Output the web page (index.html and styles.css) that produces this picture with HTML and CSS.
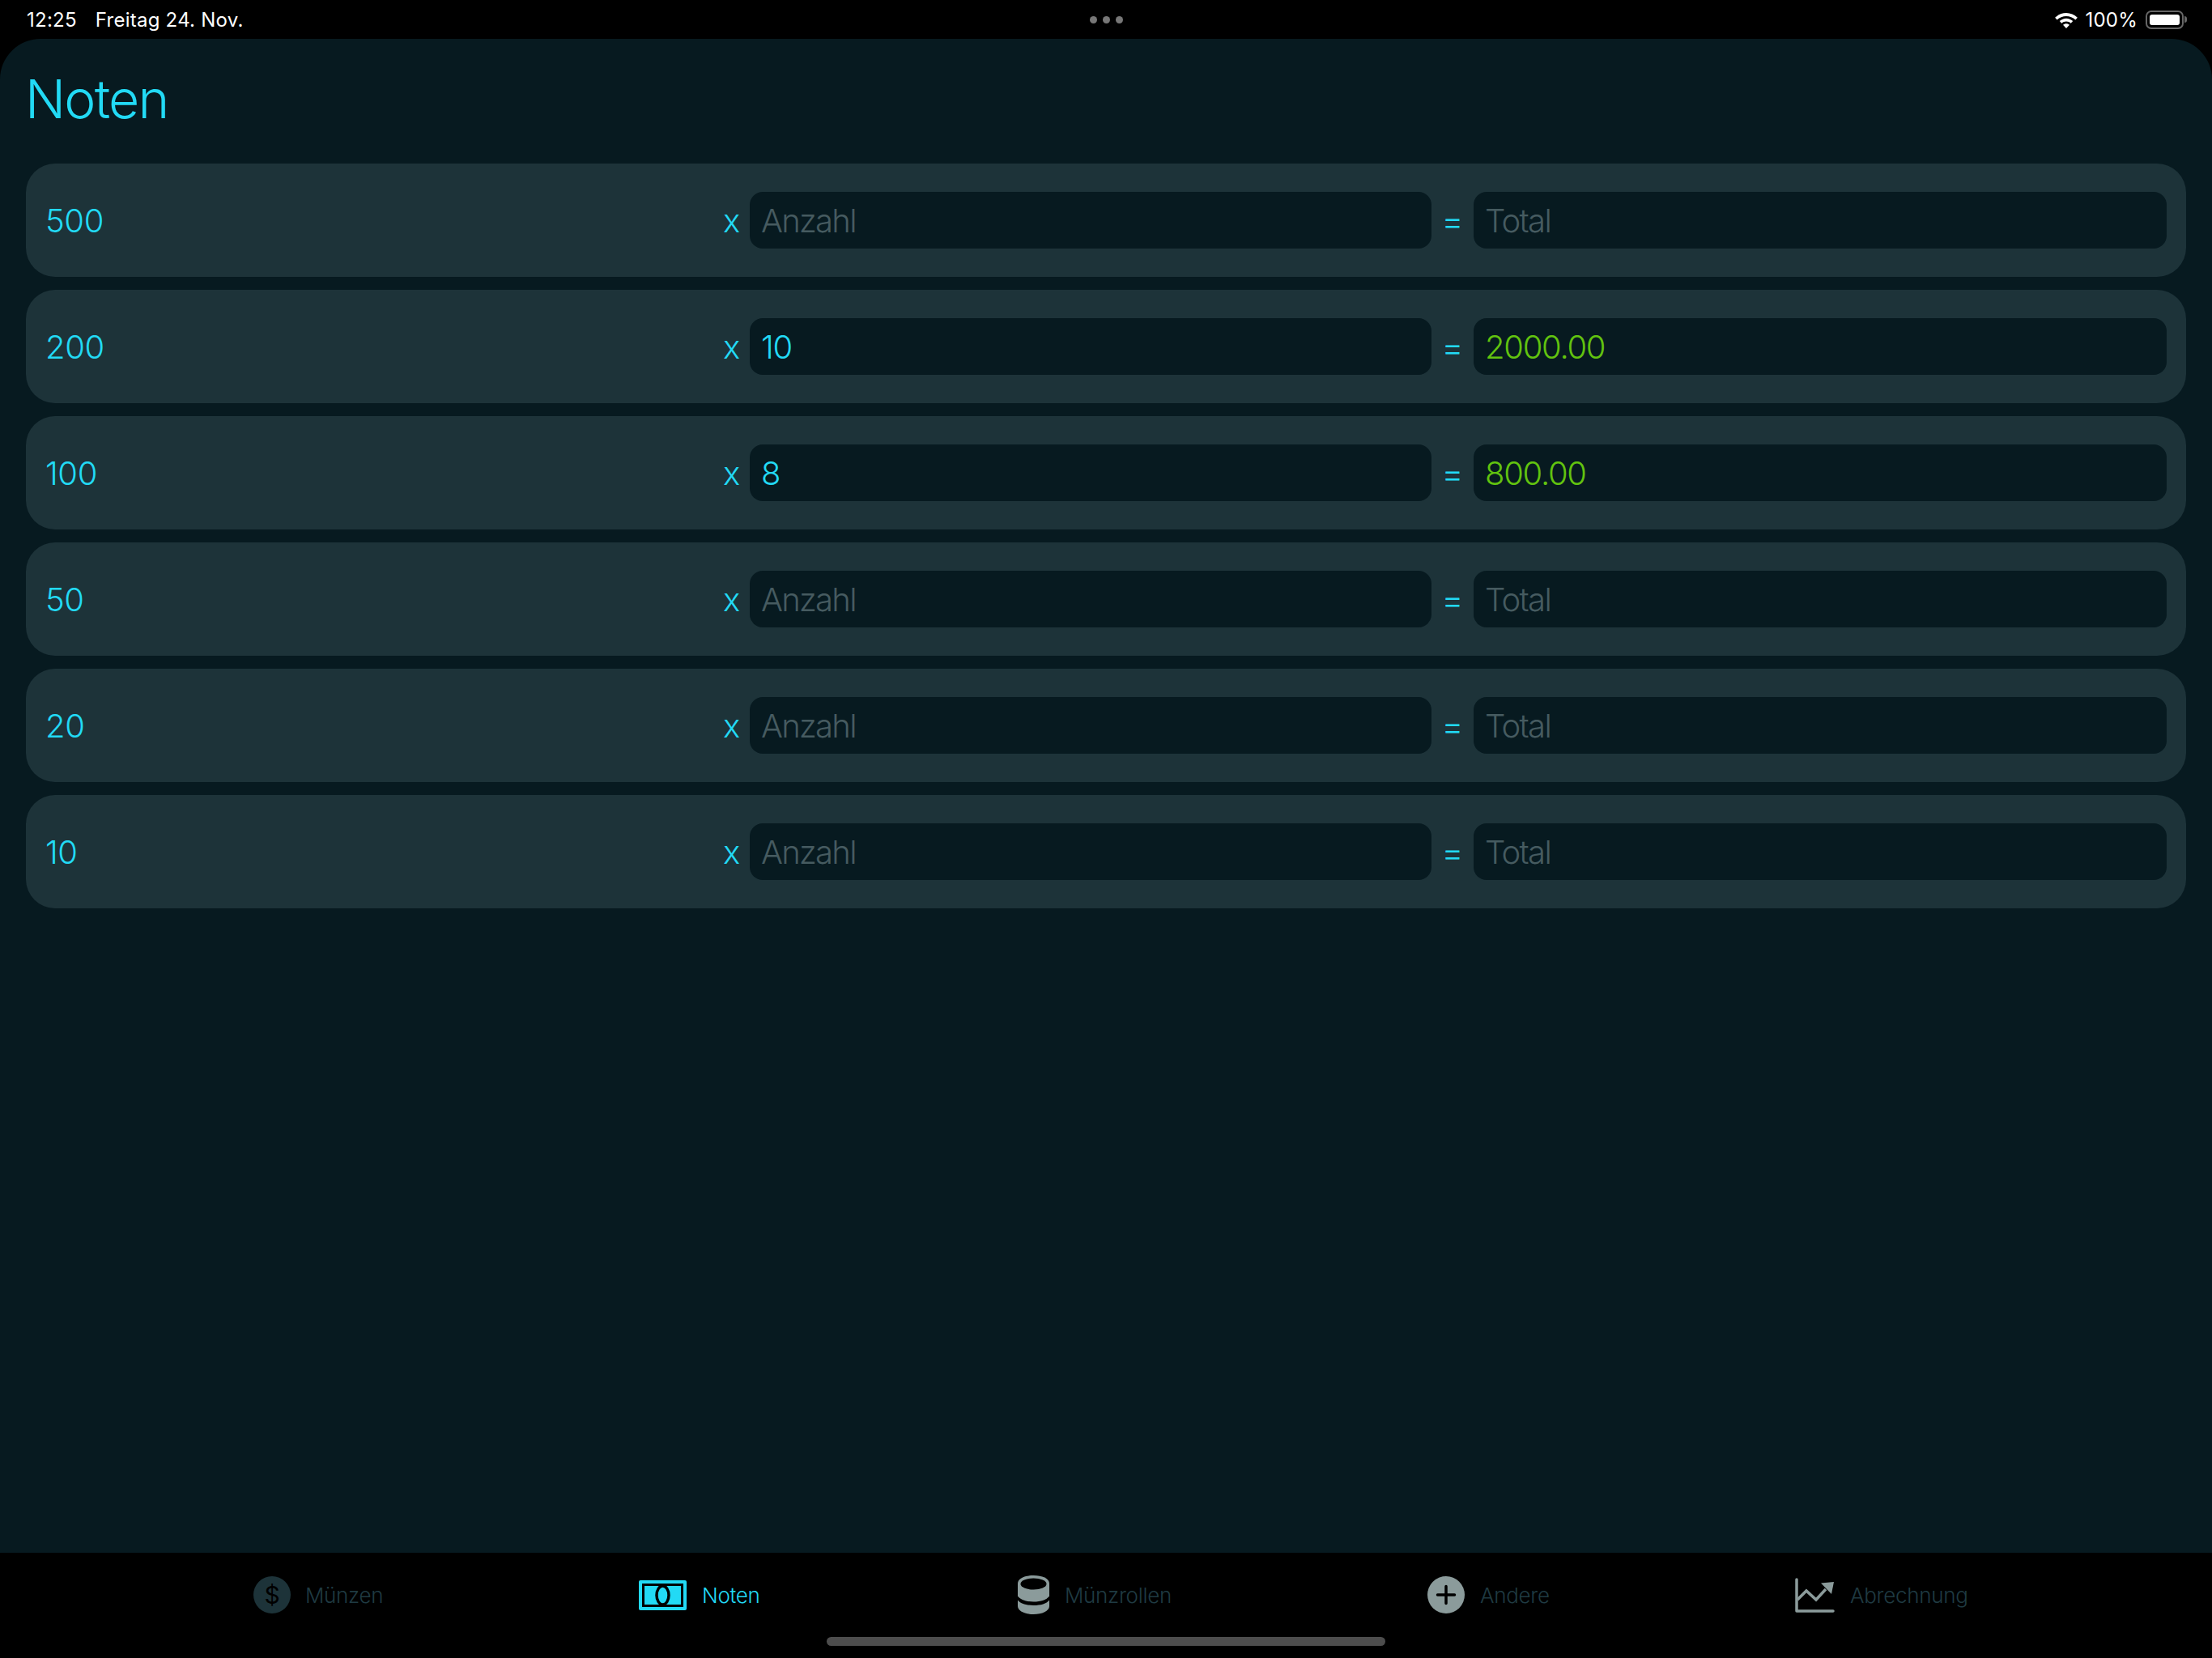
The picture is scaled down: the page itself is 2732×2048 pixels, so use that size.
FILE: index.html
```html
<!DOCTYPE html>
<html lang="de">
<head>
    <meta charset="UTF-8">
    <meta name="viewport" content="width=device-width, initial-scale=1.0">
    <title>Noten</title>
    <link rel="stylesheet" href="styles.css">
</head>
<body>
    <div class="app">
        <header class="status">
            <div class="status_left">
                <span>12:25</span>
                <span>Freitag 24. Nov.</span>
            </div>
            <div class="dots"><i></i><i></i><i></i></div>
            <div class="status_right">
                <svg class="wifi" viewBox="0 0 28 20" width="30" height="21">
                    <path d="M14 2C9 2 4.500 4 .8 7.400l2.400 2.600C6.100 7.300 9.900 5.700 14 5.700s7.900 1.600 10.800 4.300l2.400-2.600C23.500 4 19 2 14 2z" fill="#fff"/>
                    <path d="M14 8.300c-3 0-5.700 1.200-7.800 3.100l2.400 2.600c1.400-1.300 3.300-2.100 5.400-2.100s4 .8 5.400 2.100l2.400-2.600C19.700 9.500 17 8.300 14 8.300z" fill="#fff"/>
                    <path d="M14 14.500c-1.500 0-2.900.6-3.800 1.500l3.800 4 3.800-4c-.9-.9-2.300-1.500-3.800-1.500z" fill="#fff"/>
                </svg>
                <span>100%</span>
                <div class="battery"><div class="battery_fill"></div></div>
                <div class="battery_cap"></div>
            </div>
        </header>

        <main class="main">
            <h1 class="title">Noten</h1>
            <div class="rows">
                <div class="row">
                    <div class="row_value">500</div>
                    <div class="op">x</div>
                    <div class="field empty">Anzahl</div>
                    <div class="op equals">=</div>
                    <div class="field empty">Total</div>
                </div>
                <div class="row">
                    <div class="row_value">200</div>
                    <div class="op">x</div>
                    <div class="field">10</div>
                    <div class="op equals">=</div>
                    <div class="field total">2000.00</div>
                </div>
                <div class="row">
                    <div class="row_value">100</div>
                    <div class="op">x</div>
                    <div class="field">8</div>
                    <div class="op equals">=</div>
                    <div class="field total">800.00</div>
                </div>
                <div class="row">
                    <div class="row_value">50</div>
                    <div class="op">x</div>
                    <div class="field empty">Anzahl</div>
                    <div class="op equals">=</div>
                    <div class="field empty">Total</div>
                </div>
                <div class="row">
                    <div class="row_value">20</div>
                    <div class="op">x</div>
                    <div class="field empty">Anzahl</div>
                    <div class="op equals">=</div>
                    <div class="field empty">Total</div>
                </div>
                <div class="row">
                    <div class="row_value">10</div>
                    <div class="op">x</div>
                    <div class="field empty">Anzahl</div>
                    <div class="op equals">=</div>
                    <div class="field empty">Total</div>
                </div>
            </div>
        </main>

        <nav class="tabs">
            <div class="tab">
                <div class="coin">$</div>
                <span>Münzen</span>
            </div>
            <div class="tab active">
                <svg viewBox="0 0 59 37" width="59" height="37">
                    <rect width="59" height="37" rx="2" fill="#22daf5"/>
                    <rect x="5.500" y="5.500" width="48" height="26" fill="none" stroke="#000" stroke-width="3"/>
                    <ellipse cx="29.500" cy="18.500" rx="7.500" ry="11.500" fill="none" stroke="#000" stroke-width="3.500"/>
                </svg>
                <span>Noten</span>
            </div>
            <div class="tab">
                <svg viewBox="0 0 39 48" width="39" height="48">
                    <path d="M0 10C0 3.500 9 0 19.500 0S39 3.500 39 10v15.500c-3 4.500-10.500 7-19.500 7S3 30 0 25.500z" fill="#8b9b9b"/>
                    <ellipse cx="19.500" cy="10.500" rx="16" ry="7" fill="#000"/>
                    <path d="M0 30.500c3.500 4.500 10.500 6.500 19.500 6.500S35.500 35 39 30.500V38c0 6-9 10-19.500 10S0 44 0 38z" fill="#8b9b9b"/>
                </svg>
                <span>Münzrollen</span>
            </div>
            <div class="tab">
                <svg viewBox="0 0 46 46" width="46" height="46">
                    <circle cx="23" cy="23" r="23" fill="#8b9b9b"/>
                    <path d="M23 12.500v21M12.500 23h21" stroke="#000" stroke-width="3.500" stroke-linecap="round"/>
                </svg>
                <span>Andere</span>
            </div>
            <div class="tab">
                <svg viewBox="0 0 49 43" width="49" height="43">
                    <path d="M2 2v39h45" fill="none" stroke="#8b9b9b" stroke-width="3.500" stroke-linecap="round" stroke-linejoin="round"/>
                    <path d="M3 27l11-11 12 11 12-13" fill="none" stroke="#8b9b9b" stroke-width="3.500"/>
                    <path d="M32 6.500L48 5l-3 15z" fill="#8b9b9b"/>
                </svg>
                <span>Abrechnung</span>
            </div>
        </nav>
        <div class="home_bar"></div>
    </div>
</body>
</html>
```

FILE: styles.css
```css
* {
    box-sizing: border-box;
}
body {
    margin: 0;
    background: #000;
    font-family: Inter, "Noto Sans", sans-serif;
    overflow: hidden;
}
.app {
    position: relative;
    width: 2732px;
    height: 2048px;
    display: flex;
    flex-direction: column;
}

/* status bar */
.status {
    height: 48px;
    padding: 0 31px 0 33px;
    display: grid;
    grid-template-columns: 1fr auto 1fr;
    align-items: center;
    color: #fff;
    font-size: 24px;
    letter-spacing: .25px;
}
.status_left {
    display: flex;
    gap: 23px;
}
.dots {
    display: flex;
    gap: 7px;
    margin-left: -2px;
}
.dots i {
    width: 9px;
    height: 9px;
    border-radius: 50%;
    background: #777;
}
.status_right {
    display: flex;
    justify-content: flex-end;
    align-items: center;
}
.wifi {
    margin-right: 8px;
}
.battery {
    margin-left: 10px;
    width: 47px;
    height: 23px;
    padding: 3px;
    border: 2px solid #666;
    border-radius: 7px;
}
.battery_fill {
    height: 100%;
    background: #fff;
    border-radius: 3px;
}
.battery_cap {
    width: 3px;
    height: 8px;
    margin-left: 1px;
    background: #666;
    border-radius: 0 3px 3px 0;
}

/* main area */
.main {
    flex: 1;
    padding: 33px 32px 0;
    background: #071a20;
    border-radius: 50px 50px 0 0;
}
.title {
    margin: 0 0 41px -1px;
    height: 80px;
    line-height: 82px;
    font-size: 66px;
    font-weight: 350;
    letter-spacing: -1.8px;
    color: #22daf5;
}
.rows {
    display: flex;
    flex-direction: column;
    gap: 16px;
}
.row {
    height: 140px;
    padding: 0 24px;
    display: grid;
    grid-template-columns: 837px 33px 842px 52px 856px;
    align-items: center;
    background: #1d3339;
    border-radius: 36px;
    color: #22daf5;
    font-size: 40px;
    font-weight: 280;
}
.row_value {
    letter-spacing: -.4px;
}
.op {
    font-size: 40px;
    padding-top: 1px;
}
.op.equals {
    text-align: center;
    font-size: 42px;
    font-weight: 350;
    padding-top: 0;
}
.field {
    height: 70px;
    line-height: 72px;
    padding-left: 14px;
    background: #071a20;
    border-radius: 16px;
    letter-spacing: -1.3px;
}
.field.empty {
    color: #465b60;
    letter-spacing: -1.7px;
}
.field.total {
    color: #62c30f;
}

/* tab bar */
.tabs {
    height: 130px;
    padding-left: 313px;
    padding-bottom: 26px;
    display: grid;
    grid-template-columns: 476px 468px 506px 454px auto;
    align-items: center;
    background: #000;
    color: #1f3a42;
    font-size: 26px;
    font-weight: 300;
    letter-spacing: -.3px;
}
.tab {
    display: flex;
    align-items: center;
    gap: 19px;
}
.tab.active {
    color: #22daf5;
}
.coin {
    width: 46px;
    height: 46px;
    margin-right: -1px;
    border-radius: 50%;
    background: #1d3339;
    color: #000;
    font-size: 30px;
    font-weight: 400;
    text-align: center;
    line-height: 46px;
}
.home_bar {
    position: absolute;
    left: 1021px;
    top: 2022px;
    width: 690px;
    height: 11px;
    border-radius: 6px;
    background: #4d4d4d;
}
```
